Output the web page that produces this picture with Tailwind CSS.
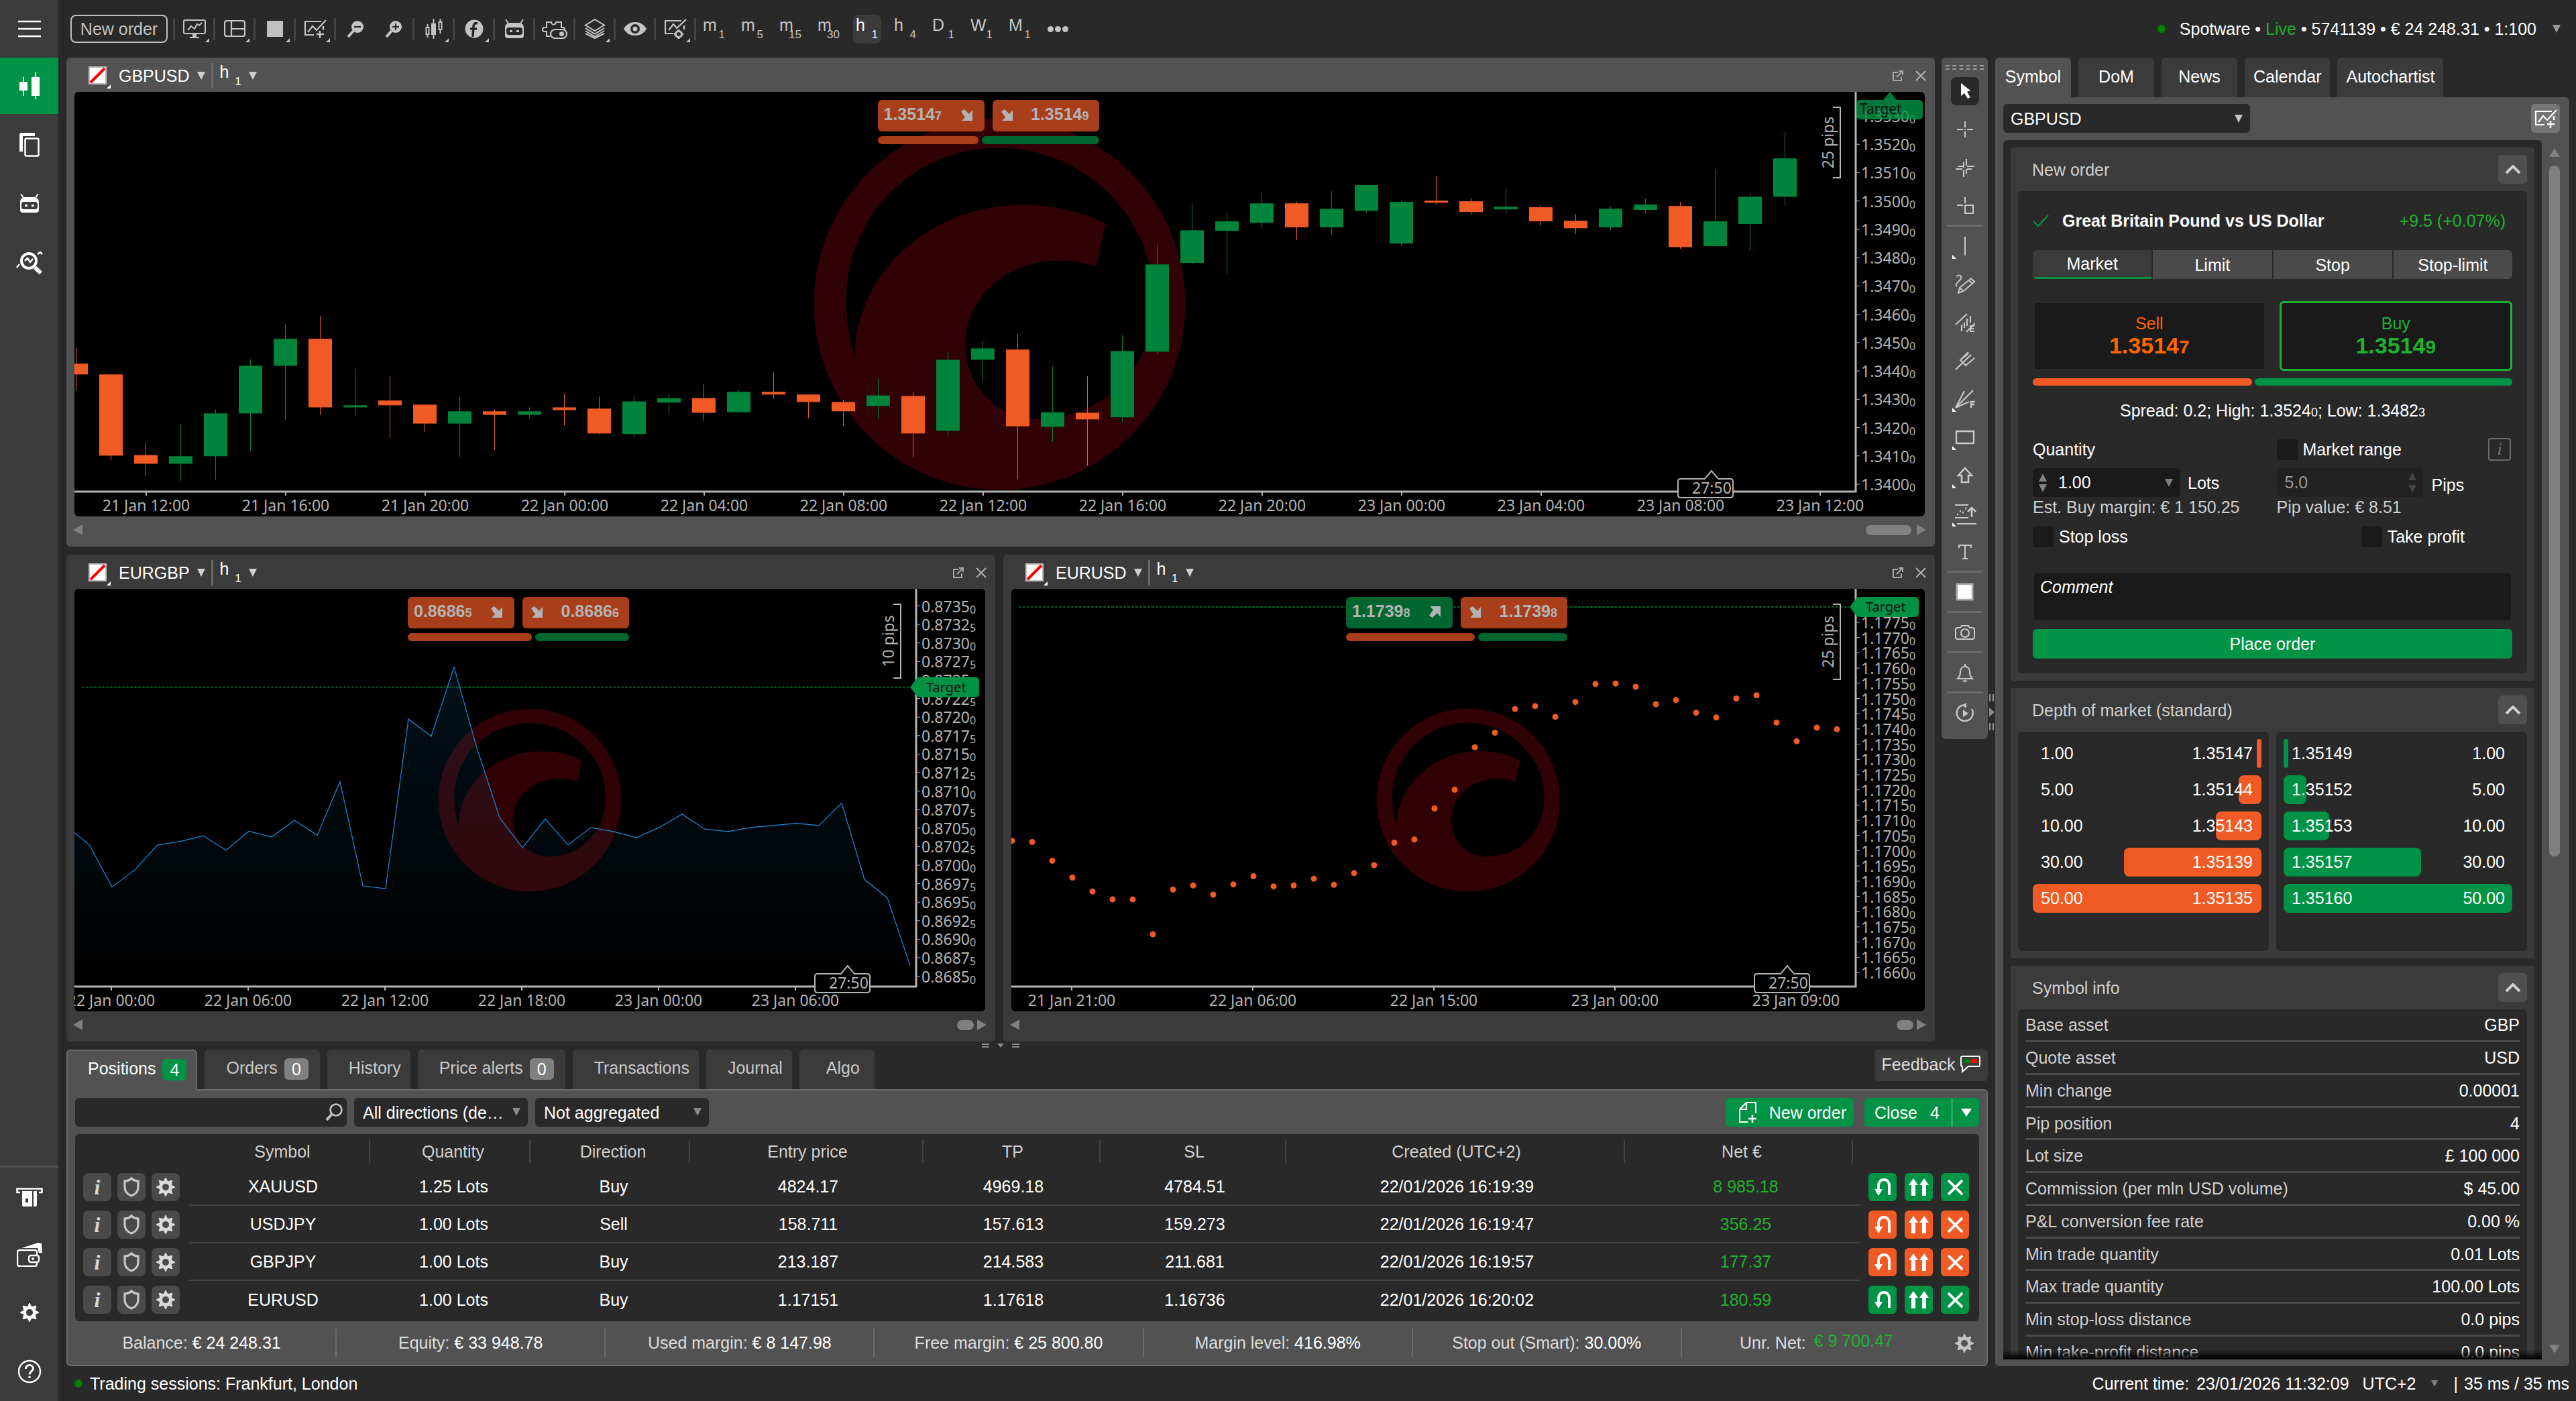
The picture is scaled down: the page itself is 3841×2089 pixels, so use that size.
<!DOCTYPE html>
<html lang="en">
<head>
  <meta charset="UTF-8">
  <title>Trading workspace</title>
  <script src="https://cdn.jsdelivr.net/npm/@tailwindcss/browser@4"></script>
</head>
<body class="bg-[#292929] font-['Liberation_Sans',Arial,sans-serif] text-[25px] leading-[30px] text-white">

  <!-- icons -->
  <svg class="hidden" xmlns="http://www.w3.org/2000/svg">
    <symbol id="i-menu" viewBox="0 0 34 26"><path d="M0 2h34M0 13h34M0 24h34" stroke="currentColor" stroke-width="2.4"/></symbol>
    <symbol id="i-bars" viewBox="0 0 30 40"><path d="M6 7v28M24 0v40" stroke="currentColor" stroke-width="2"/><path d="M0 14h12v13H0zM18 7h12v28H18z" fill="currentColor"/></symbol>
    <symbol id="i-copy" viewBox="0 0 30 36"><path d="M0 28V3a3 3 0 0 1 3-3h20v5H5v23z" fill="currentColor"/><rect x="8.500" y="8.500" width="20" height="26" rx="2" fill="none" stroke="currentColor" stroke-width="2.500"/></symbol>
    <symbol id="i-robot" viewBox="0 0 30 28"><path d="M2 0l4 6M28 0l-4 6" stroke="currentColor" stroke-width="2"/><path fill="currentColor" fill-rule="evenodd" d="M1 24V12C1 7 5 5 9 5h12c4 0 8 2 8 7v12a4 4 0 0 1-4 4H5a4 4 0 0 1-4-4zM7 12a4 4 0 0 0-4 4v3a4 4 0 0 0 4 4h16a4 4 0 0 0 4-4v-3a4 4 0 0 0-4-4zM8 16h4v3H8zM18 16h4v3h-4z"/></symbol>
    <symbol id="i-analyze" viewBox="0 0 40 34"><circle cx="19" cy="14" r="11" fill="none" stroke="currentColor" stroke-width="4"/><path d="M28 24l9 8" stroke="currentColor" stroke-width="6"/><path d="M13 14l4-4 4 6 4-5" fill="none" stroke="currentColor" stroke-width="2.500"/><path d="M1 24l4-5M32 4l4-3 3 3" fill="none" stroke="currentColor" stroke-width="2.500"/></symbol>
    <symbol id="i-atm" viewBox="0 0 40 28"><path d="M6 7H1.500V1.500h37V7H34" fill="none" stroke="currentColor" stroke-width="2.500"/><path fill="currentColor" fill-rule="evenodd" d="M9 5h22v21a2 2 0 0 1-2 2H11a2 2 0 0 1-2-2zM14 16v6h4v-6zM24 5v23h2V5z"/></symbol>
    <symbol id="i-wallet" viewBox="0 0 38 36"><path d="M7 8L32 0l5 1 1 14h-5l-2-7z" fill="currentColor"/><path d="M30 19v-5a3 3 0 0 0-3-3H4a3 3 0 0 0-3 3v18a3 3 0 0 0 3 3h23a3 3 0 0 0 3-3v-3" fill="none" stroke="currentColor" stroke-width="2.400"/><rect x="18" y="19" width="15" height="10" rx="3" fill="none" stroke="currentColor" stroke-width="2.400"/><circle cx="24" cy="24" r="2" fill="currentColor"/></symbol>
    <symbol id="i-gear" viewBox="0 0 30 30"><path fill="currentColor" stroke="currentColor" stroke-width="1" stroke-linejoin="round" fill-rule="evenodd" d="M15 1l3 5.900 6.900-1.800-1.800 6.900L29 15l-5.900 3 1.800 6.900-6.900-1.800L15 29l-3-5.900-6.900 1.800 1.800-6.900L1 15l5.900-3-1.800-6.900L12 6.900zM15 9.500a5.500 5.500 0 1 0 0 11 5.500 5.500 0 0 0 0-11z"/></symbol>
    <symbol id="i-help" viewBox="0 0 36 36"><circle cx="18" cy="18" r="16" fill="none" stroke="currentColor" stroke-width="2.400"/><path d="M12.500 14c0-3.500 2.400-5.500 5.500-5.500s5.500 2 5.500 5c0 4-5.500 4.500-5.500 9M18 25v3" fill="none" stroke="currentColor" stroke-width="3"/></symbol>
    <symbol id="i-monitor" viewBox="0 0 34 28"><rect x="1" y="1" width="32" height="20" rx="2" fill="none" stroke="currentColor" stroke-width="2"/><path d="M14 21h6v5h4v2H10v-2h4z" fill="currentColor"/><path d="M7 16l5-6 5 4 4-7 3 2 4-4" fill="none" stroke="currentColor" stroke-width="2"/></symbol>
    <symbol id="i-layout" viewBox="0 0 32 26"><rect x="1" y="1" width="30" height="23" rx="3" fill="none" stroke="currentColor" stroke-width="2.200"/><path d="M11 1v23M11 13h20" stroke="currentColor" stroke-width="2.200"/></symbol>
    <symbol id="i-chartplus" viewBox="0 0 34 28"><path d="M26 3H2v20h13" fill="none" stroke="currentColor" stroke-width="2.200"/><path d="M6 19l7-9 6 6L33 1" fill="none" stroke="currentColor" stroke-width="2.200"/><path d="M29 10v6M24 17v11M19 22h11" stroke="currentColor" stroke-width="2.400"/></symbol>
    <symbol id="i-chartgear" viewBox="0 0 34 30"><path d="M26 3H2v19h12" fill="none" stroke="currentColor" stroke-width="2.200"/><path d="M7 17l7-9 5 6L33 1M30 10v6" fill="none" stroke="currentColor" stroke-width="2.200"/><circle cx="22" cy="23" r="4.500" fill="none" stroke="currentColor" stroke-width="3"/><path d="M22 16v14M15 23h14" stroke="currentColor" stroke-width="3" stroke-dasharray="3 8"/></symbol>
    <symbol id="i-zoomout" viewBox="0 0 26 25"><circle cx="16" cy="9" r="9" fill="currentColor"/><path d="M10 15l-8 9" stroke="currentColor" stroke-width="4"/><path d="M11 9h10" stroke="#292929" stroke-width="2.200"/></symbol>
    <symbol id="i-zoomin" viewBox="0 0 26 25"><circle cx="16" cy="9" r="9" fill="currentColor"/><path d="M10 15l-8 9" stroke="currentColor" stroke-width="4"/><path d="M11 9h10M16 4v10" stroke="#292929" stroke-width="2.200"/></symbol>
    <symbol id="i-candles" viewBox="0 0 26 30"><path d="M3.500 8v5M3.500 23v5M12.500 0v30M22.500 0v5M22.500 16v6" stroke="currentColor" stroke-width="2"/><path d="M1.500 13h4v10h-4zM20.500 5h4v11h-4z" fill="none" stroke="currentColor" stroke-width="2"/><path d="M9 7h7v17H9z" fill="currentColor"/></symbol>
    <symbol id="i-func" viewBox="0 0 28 28"><circle cx="14" cy="14" r="13.500" fill="currentColor"/><path d="M19 6c-4-1.500-6 1-6 5l-1 15M8 14h10" fill="none" stroke="#292929" stroke-width="3.500"/></symbol>
    <symbol id="i-puzzle" viewBox="0 0 38 29"><path d="M13 25H7v-7H4a3 3 0 0 1 0-6h3V4h7a3.500 3.500 0 1 0 7 0h8v8h3a3 3 0 0 1 2 3" fill="none" stroke="currentColor" stroke-width="2"/><rect x="13" y="15" width="24" height="13" rx="6.500" fill="none" stroke="currentColor" stroke-width="2.200"/><circle cx="29.500" cy="21.500" r="3.500" fill="currentColor"/></symbol>
    <symbol id="i-layers" viewBox="0 0 32 30"><path d="M16 1l14 8.500L16 18 2 9.500zM2 14l14 8.500L30 14M2 18l14 8.500L30 18M2 22l14 7 14-7" fill="none" stroke="currentColor" stroke-width="2"/></symbol>
    <symbol id="i-eye" viewBox="0 0 34 20"><path fill="currentColor" fill-rule="evenodd" d="M0 10C4 3 10 0 17 0s13 3 17 10c-4 7-10 10-17 10S4 17 0 10zM17 3a7 7 0 1 0 0 14 7 7 0 0 0 0-14zM17 6.500a3.500 3.500 0 1 1 0 7 3.500 3.500 0 0 1 0-7z"/></symbol>
    <symbol id="i-down" viewBox="0 0 12 12"><path d="M0 0h12L6 12z" fill="currentColor"/></symbol>
    <symbol id="i-up" viewBox="0 0 12 12"><path d="M0 12h12L6 0z" fill="currentColor"/></symbol>
    <symbol id="i-left" viewBox="0 0 14 16"><path d="M14 0v16L0 8z" fill="currentColor"/></symbol>
    <symbol id="i-right" viewBox="0 0 14 16"><path d="M0 0v16L14 8z" fill="currentColor"/></symbol>
    <symbol id="i-corner" viewBox="0 0 6 6"><path d="M6 0v6H0z" fill="currentColor"/></symbol>
    <symbol id="i-popout" viewBox="0 0 16 16"><path d="M8 3H1v12h12V9M6 10l8-8M9 1h6v6" fill="none" stroke="currentColor" stroke-width="2"/></symbol>
    <symbol id="i-x" viewBox="0 0 16 16"><path d="M1 1l14 14M15 1L1 15" stroke="currentColor" stroke-width="2"/></symbol>
    <symbol id="i-se" viewBox="0 0 17 17"><path d="M17 1v16H1l5-5-6-9 5-3 7 7z" fill="currentColor"/></symbol>
    <symbol id="i-ne" viewBox="0 0 17 17"><path d="M17 16V0H1l5 5-6 9 5 3 7-7z" fill="currentColor"/></symbol>
    <symbol id="i-chevron" viewBox="0 0 24 14"><path d="M2 12L12 2l10 10" fill="none" stroke="currentColor" stroke-width="4"/></symbol>
    <symbol id="i-check" viewBox="0 0 24 18"><path d="M1 10l7 7L23 1" fill="none" stroke="currentColor" stroke-width="2.400"/></symbol>
    <symbol id="i-search" viewBox="0 0 26 26"><circle cx="16" cy="10" r="8.500" fill="none" stroke="currentColor" stroke-width="2.600"/><path d="M10 16l-8 9" stroke="currentColor" stroke-width="4"/></symbol>
    <symbol id="i-feedback" viewBox="0 0 30 26"><path d="M3 1h24a2 2 0 0 1 2 2v11a2 2 0 0 1-2 2H12l-9 8V16a2 2 0 0 1-2-2V3a2 2 0 0 1 2-2z" fill="none" stroke="#fff" stroke-width="2"/><path d="M5 5h9v6H5z" fill="#008000"/><path d="M16 5h9v6h-9z" fill="#f00"/></symbol>
    <symbol id="i-docplus" viewBox="0 0 26 31"><path d="M25 17V1H11L1 11v19h12M11 1v10H1" fill="none" stroke="currentColor" stroke-width="2.200"/><path d="M20 19v12M14 25h12" stroke="currentColor" stroke-width="2.600"/></symbol>
    <symbol id="i-shield" viewBox="0 0 26 30"><path d="M13 2c3 3 7 4 10 4v9c0 6-4 11-10 13C7 26 3 21 3 15V6c3 0 7-1 10-4z" fill="none" stroke="currentColor" stroke-width="3.200"/></symbol>
    <symbol id="i-reverse" viewBox="0 0 24 26"><path d="M6 17v-6c0-5 3-9 8-9s8 4 8 9v14" fill="none" stroke="currentColor" stroke-width="4"/><path d="M0 16h12L6 26z" fill="currentColor"/></symbol>
    <symbol id="i-double" viewBox="0 0 30 26"><path d="M0 10L7 0l7 10H10v16H4V10zM16 10L23 0l7 10h-4v16h-6V10z" fill="currentColor"/></symbol>
    <symbol id="i-close" viewBox="0 0 24 24"><path d="M1 1l22 22M23 1L1 23" stroke="currentColor" stroke-width="4"/></symbol>

    <!-- drawing tools -->
    <symbol id="t-cursor" viewBox="0 0 30 30"><path d="M9 3l14 11-5 2 5 8-4 2-5-8-5 4z" fill="#fff"/></symbol>
    <symbol id="t-cross" viewBox="0 0 30 30"><path d="M15 3v9M15 18v9M3 15h9M18 15h9M14 15h2" stroke="currentColor" stroke-width="2"/></symbol>
    <symbol id="t-cross2" viewBox="0 0 30 30"><path d="M13 7v8M17 2v10M13 18v11M17 17v7M1 17h10M5 13h7M18 17h7M18 13h11" stroke="currentColor" stroke-width="2"/></symbol>
    <symbol id="t-crossbox" viewBox="0 0 30 30"><path d="M15 2v9M3 14h9" stroke="currentColor" stroke-width="2"/><path d="M15 14h12v12H15z" fill="none" stroke="currentColor" stroke-width="2"/></symbol>
    <symbol id="t-line" viewBox="0 0 30 30"><path d="M15 1v28" stroke="currentColor" stroke-width="2"/></symbol>
    <symbol id="t-pencil" viewBox="0 0 30 30"><path d="M2 3c6-4 10 1 5 6s-7 6-4 9" fill="none" stroke="currentColor" stroke-width="2"/><path d="M5 28l2-8L24 6l5 5-16 14zM21 9l5 5M7 20l5 5" fill="none" stroke="currentColor" stroke-width="2"/></symbol>
    <symbol id="t-channel" viewBox="0 0 30 30"><path d="M1 18L18 2M17 29l13-13M10 18v10M14 15v8M18 9v11M23 5v10" stroke="currentColor" stroke-width="2.200"/><path d="M29 20h-6v8h6M23 24h5" fill="none" stroke="currentColor" stroke-width="2"/></symbol>
    <symbol id="t-fork" viewBox="0 0 30 30"><path d="M1 28L24 6M20 2L8 14l8 8L29 11M12 11L20 4" fill="none" stroke="currentColor" stroke-width="2.200"/></symbol>
    <symbol id="t-fan" viewBox="0 0 30 30"><path d="M1 28L14 3M1 28L27 2M1 28l20-9M1 28" stroke="currentColor" stroke-width="2.200"/><path d="M24 28v-9h6M24 23h5" fill="none" stroke="currentColor" stroke-width="2.400"/></symbol>
    <symbol id="t-rect" viewBox="0 0 30 30"><path d="M2 6h26v18H2z" fill="none" stroke="currentColor" stroke-width="2.400"/></symbol>
    <symbol id="t-arrow" viewBox="0 0 30 30"><path d="M15 4l10 11h-5v10H10V15H5z" fill="none" stroke="currentColor" stroke-width="2.600"/></symbol>
    <symbol id="t-pattern" viewBox="0 0 34 34"><path d="M2 4h20M2 23h20M5 32h29" stroke="currentColor" stroke-width="2.200"/><path d="M5 18h2M9 13h2M13 15h2M17 9h2" stroke="currentColor" stroke-width="2.600"/><path d="M27 22V10M21 14l6-6 6 6" fill="none" stroke="currentColor" stroke-width="2.600"/></symbol>
    <symbol id="t-text" viewBox="0 0 30 30"><path d="M6 9V5h18v4M15 5v20M11 25h8" fill="none" stroke="currentColor" stroke-width="2"/></symbol>
    <symbol id="t-fill" viewBox="0 0 30 30"><path d="M2 2h26v26H2z" fill="#fff" stroke="#aaa" stroke-width="3"/></symbol>
    <symbol id="t-camera" viewBox="0 0 30 30"><path d="M8 8l2-3h10l2 3h4a3 3 0 0 1 3 3v11a3 3 0 0 1-3 3H4a3 3 0 0 1-3-3V11a3 3 0 0 1 3-3z" fill="none" stroke="currentColor" stroke-width="2"/><circle cx="15" cy="16" r="6" fill="none" stroke="currentColor" stroke-width="2.200"/></symbol>
    <symbol id="t-bell" viewBox="0 0 30 30"><path d="M4 24c3-3 4-5 4-10s3-8 7-8 7 3 7 8 1 7 4 10zM15 2v4" fill="none" stroke="currentColor" stroke-width="2.200"/><path d="M12 27h6l-3 2z" fill="currentColor" stroke="currentColor"/></symbol>
    <symbol id="t-replay" viewBox="0 0 30 30"><path d="M13 3.200A12 12 0 1 0 25 9" fill="none" stroke="currentColor" stroke-width="2.400"/><path d="M17 0v8l-6-4z" fill="currentColor"/><path d="M12 10v11l8-5z" fill="currentColor"/></symbol>
    <pattern id="dots" width="4" height="4" patternUnits="userSpaceOnUse"><rect width="2" height="2" fill="#8a8a8a"/></pattern>
  </svg>

  <div class="flex h-screen overflow-hidden">

    <!-- sidebar -->
    <nav class="flex w-[87px] shrink-0 flex-col bg-[#3b3b3b]">
      <button aria-label="Menu" class="flex h-[86px] items-center justify-center"><svg class="h-[26px] w-[34px]"><use href="#i-menu"/></svg></button>
      <button aria-label="Trade" class="flex h-[84px] items-center justify-center bg-[#009345]"><svg class="h-[40px] w-[30px]"><use href="#i-bars"/></svg></button>
      <button aria-label="Copy" class="flex h-[92px] items-center justify-center"><svg class="h-[36px] w-[30px]"><use href="#i-copy"/></svg></button>
      <button aria-label="Algo" class="flex h-[82px] items-center justify-center"><svg class="h-[28px] w-[30px]"><use href="#i-robot"/></svg></button>
      <button aria-label="Analyze" class="flex h-[96px] items-center justify-center"><svg class="h-[34px] w-[40px]"><use href="#i-analyze"/></svg></button>
      <div class="mt-auto flex flex-col border-t-[3px] border-[#525252]">
        <button aria-label="Deposit" class="flex h-[88px] items-center justify-center"><svg class="h-[28px] w-[40px]"><use href="#i-atm"/></svg></button>
        <button aria-label="Wallet" class="flex h-[84px] items-center justify-center"><svg class="h-[36px] w-[38px]"><use href="#i-wallet"/></svg></button>
        <button aria-label="Settings" class="flex h-[88px] items-center justify-center"><svg class="h-[30px] w-[30px]"><use href="#i-gear"/></svg></button>
        <button aria-label="Help" class="flex h-[88px] items-center justify-center"><svg class="h-[36px] w-[36px]"><use href="#i-help"/></svg></button>
      </div>
    </nav>

    <div class="flex min-w-0 flex-1 flex-col">

      <!-- top toolbar -->
      <header class="flex h-[86px] shrink-0 items-center pr-[23px] pl-[18px] text-[#c4c4c4]">
        <button class="mr-[8px] h-[42px] w-[145px] rounded-[8px] border-2 border-[#c0c0c0]">New order</button>
        <div id="tools" class="flex"></div>
        <div id="frames" class="ml-[6px] flex gap-[15px]"></div>
        <button aria-label="More" class="ml-[20px] flex gap-[2px]">
          <i class="size-[9px] rounded-full bg-[#c4c4c4]"></i><i class="size-[9px] rounded-full bg-[#c4c4c4]"></i><i class="size-[9px] rounded-full bg-[#c4c4c4]"></i>
        </button>
        <button class="ml-auto flex items-center text-white">
          <i class="mr-[21px] size-[12px] rounded-full bg-[#008000]"></i>
          <span>Spotware • <span class="text-[#1db32f]">Live</span> • 5741139 • € 24 248.31 • 1:100</span>
          <svg class="ml-[24px] size-[12px] text-[#999]"><use href="#i-down"/></svg>
        </button>
      </header>

      <div class="flex min-h-0 flex-1 pr-[10px] pl-[12px]">

        <!-- charts and positions -->
        <main class="flex min-w-0 flex-1 flex-col">
          <div class="flex min-h-0 flex-1 gap-[10px]">
            <div class="flex min-w-0 flex-1 flex-col">
              <div id="charts" class="grid min-h-0 flex-1 grid-cols-[1385fr_1389fr] grid-rows-[729fr_726fr] gap-[12px]"></div>
              <div class="flex h-[12px] items-center justify-center gap-[12px] text-[#8a8a8a]">
                <i class="h-[6px] w-[11px] border-y-2 border-current"></i>
                <svg class="h-[6px] w-[10px]" viewBox="0 0 10 6"><path d="M0 0h10L5 6z" fill="currentColor"/></svg>
                <i class="h-[6px] w-[11px] border-y-2 border-current"></i>
              </div>
            </div>
            <div id="drawing" class="flex w-[69px] shrink-0 flex-col items-center self-start rounded-[6px] bg-[#525252] pb-[11px] text-[#c8c8c8]">
              <div class="flex h-[21px] w-[57px] flex-col justify-end gap-[3px] pb-[3px]">
                <i class="border-t-2 border-dashed border-[#999]"></i><i class="border-t-2 border-dashed border-[#999]"></i>
              </div>
            </div>
          </div>

          <!-- positions -->
          <section class="shrink-0">
            <div class="flex h-[59px] justify-between">
              <div id="tabs" class="flex gap-[11px]" role="tablist"></div>
              <button class="flex h-[47px] w-[169px] items-center justify-center gap-[8px] rounded-[6px] bg-[#3b3b3b] pb-[3px] text-[#dcdcdc]">Feedback <svg class="h-[26px] w-[30px]"><use href="#i-feedback"/></svg></button>
            </div>
            <div class="rounded-[6px] rounded-tl-none border-2 border-[#6b6b6b] bg-[#525252] px-[11px] pt-[11px]">
              <div class="mb-[11px] flex h-[43px] gap-[11px]">
                <label class="relative w-[405px]">
                  <input type="text" aria-label="Search" class="h-full w-full rounded-[6px] bg-[#292929] pr-12 pl-3 outline-none">
                  <svg class="absolute top-[8px] right-[6px] size-[26px] text-[#c4c4c4]"><use href="#i-search"/></svg>
                </label>
                <label class="relative w-[259px]">
                  <select aria-label="Direction" class="h-full w-full appearance-none rounded-[6px] bg-[#292929] pl-[13px]"><option>All directions (de…</option></select>
                  <svg class="pointer-events-none absolute top-[15px] right-[11px] size-[12px] text-[#8a8a8a]"><use href="#i-down"/></svg>
                </label>
                <label class="relative w-[259px]">
                  <select aria-label="Aggregation" class="h-full w-full appearance-none rounded-[6px] bg-[#292929] pl-[13px]"><option>Not aggregated</option></select>
                  <svg class="pointer-events-none absolute top-[15px] right-[11px] size-[12px] text-[#8a8a8a]"><use href="#i-down"/></svg>
                </label>
                <button class="ml-auto flex w-[191px] items-center justify-end gap-[19px] rounded-[6px] bg-[#009345] pr-[11px]"><svg class="h-[31px] w-[26px]"><use href="#i-docplus"/></svg>New order</button>
                <div class="ml-[5px] flex w-[171px] rounded-[6px] bg-[#009345]">
                  <button class="flex flex-1 items-center justify-between pr-[17px] pl-[15px]"><span>Close</span><span>4</span></button>
                  <button aria-label="Close options" class="flex w-[42px] items-center justify-center border-l-[3px] border-[#2ba562]"><svg class="h-[12px] w-[16px]" viewBox="0 0 16 12"><path d="M0 0h16L8 12z" fill="currentColor"/></svg></button>
                </div>
              </div>
              <div class="rounded-[6px] bg-[#292929] pb-[4px]">
                <table class="w-full table-fixed border-separate border-spacing-0 text-center">
                  <colgroup>
                    <col class="w-[170px]"><col class="w-[270px]"><col class="w-[239px]"><col class="w-[238px]"><col class="w-[348px]"><col class="w-[264px]"><col class="w-[277px]"><col class="w-[505px]"><col class="w-[350px]"><col class="w-[178px]">
                  </colgroup>
                  <thead class="text-[#cfcfcf]"><tr id="heads" class="h-[51px]"></tr></thead>
                  <tbody id="positions"></tbody>
                </table>
              </div>
              <div class="flex h-[65px] items-center">
                <div id="balance" class="-ml-[11px] grid flex-1 grid-cols-7 pr-[53px] text-center text-[#dcdcdc]"></div>
                <button aria-label="Panel settings" class="mr-[7px] -ml-[48px] text-[#c4c4c4]"><svg class="size-[30px]"><use href="#i-gear"/></svg></button>
              </div>
            </div>
          </section>
        </main>

        <div class="flex w-[11px] shrink-0 items-center justify-center text-[#8a8a8a]">
          <svg class="h-[54px] w-[8px]" viewBox="0 0 8 54"><path d="M1 0v11M6 0v11M1 43v11M6 43v11" stroke="currentColor" stroke-width="2.500"/><path d="M0 20v14l8-7z" fill="currentColor"/></svg>
        </div>

        <!-- symbol panel -->
        <aside class="flex w-[856px] shrink-0 flex-col">
          <div class="flex h-[59px] shrink-0 gap-[11px]" role="tablist">
            <button role="tab" class="min-w-[113px] rounded-t-[6px] bg-[#525252] px-[13px] pb-[4px]">Symbol</button>
            <button role="tab" class="min-w-[113px] rounded-t-[6px] bg-[#3b3b3b] px-[13px] pb-[4px]">DoM</button>
            <button role="tab" class="min-w-[113px] rounded-t-[6px] bg-[#3b3b3b] px-[13px] pb-[4px]">News</button>
            <button role="tab" class="min-w-[113px] rounded-t-[6px] bg-[#3b3b3b] px-[13px] pb-[4px]">Calendar</button>
            <button role="tab" class="min-w-[113px] rounded-t-[6px] bg-[#3b3b3b] px-[13px] pb-[4px]">Autochartist</button>
          </div>
          <div class="flex min-h-0 flex-1 flex-col rounded-[6px] rounded-tl-none bg-[#525252] pt-[10px] pr-[14px] pb-[10px] pl-[12px]">
            <div class="mb-[11px] flex h-[43px] shrink-0 justify-between">
              <label class="relative w-[368px]">
                <select aria-label="Symbol" class="h-full w-full appearance-none rounded-[6px] bg-[#292929] pl-[11px]"><option>GBPUSD</option></select>
                <svg class="pointer-events-none absolute top-[16px] right-[11px] size-[12px] text-[#c4c4c4]"><use href="#i-down"/></svg>
              </label>
              <button aria-label="Open chart" class="flex w-[43px] items-center justify-center rounded-[6px] bg-[#757575]"><svg class="h-[28px] w-[34px]"><use href="#i-chartplus"/></svg></button>
            </div>
            <div class="flex min-h-0 flex-1 gap-[11px]">
              <div class="relative min-w-0 flex-1 overflow-hidden rounded-t-[6px] bg-[#292929] p-[11px]">

                <!-- new order -->
                <section class="mb-[11px] rounded-[4px] bg-[#3b3b3b] px-[11px] pb-[11px]">
                  <div class="flex h-[65px] items-center">
                    <svg class="mr-[13px] h-[44px] w-[8px]"><rect width="8" height="44" fill="url(#dots)"/></svg>
                    <h2 class="text-[#cfcfcf]">New order</h2>
                    <button aria-label="Collapse" class="ml-auto flex size-[43px] items-center justify-center rounded-[6px] bg-[#4f4f4f] text-[#d0d0d0]"><svg class="h-[14px] w-[24px]"><use href="#i-chevron"/></svg></button>
                  </div>
                  <form class="rounded-[6px] bg-[#292929] px-[22px] pt-[22px] pb-[22px]">
                    <div class="flex h-[44px] items-center">
                      <svg class="mr-[20px] h-[18px] w-[24px] text-[#009345]"><use href="#i-check"/></svg>
                      <b>Great Britain Pound vs US Dollar</b>
                      <span class="mr-[10px] ml-auto text-[#1db32f]">+9.5 (+0.07%)</span>
                    </div>
                    <div class="mt-[22px] grid h-[43px] grid-cols-4 gap-[2px] overflow-hidden rounded-[6px]">
                      <button type="button" class="border-b-[3px] border-[#009345] bg-[#3b3b3b]">Market</button>
                      <button type="button" class="bg-[#4a4a4a]">Limit</button>
                      <button type="button" class="bg-[#4a4a4a]">Stop</button>
                      <button type="button" class="bg-[#4a4a4a]">Stop-limit</button>
                    </div>
                    <div class="mt-[33px] grid h-[104px] grid-cols-2 gap-[20px]">
                      <button type="button" class="rounded-[6px] border-[3px] border-transparent bg-[#1a1a1a] bg-clip-padding text-[#ff6600]">
                        <span class="block">Sell</span><b class="block text-[34px] leading-[36px]">1.3514<span class="text-[28px]">7</span></b>
                      </button>
                      <button type="button" class="rounded-[6px] border-[3px] border-[#1db32f] bg-[#1a1a1a] text-[#1db32f]">
                        <span class="block">Buy</span><b class="block text-[34px] leading-[36px]">1.3514<span class="text-[28px]">9</span></b>
                      </button>
                    </div>
                    <div class="mt-[11px] grid h-[11px] grid-cols-[327fr_383fr] gap-[4px]"><i class="rounded-full bg-[#f05a25]"></i><i class="rounded-full bg-[#009345]"></i></div>
                    <p class="mt-[22px] text-center">Spread: 0.2; High: 1.3524<span class="text-[18px]">0</span>; Low: 1.3482<span class="text-[18px]">3</span></p>
                    <div class="mt-[23px] grid h-[34px] grid-cols-[363fr_351fr] items-center">
                      <label for="qty">Quantity</label>
                      <div class="flex items-center">
                        <label class="flex items-center gap-[8px]"><input type="checkbox" class="size-[31px] appearance-none rounded-[4px] bg-[#1a1a1a]">Market range</label>
                        <button type="button" aria-label="Info" class="mr-[2px] ml-auto size-[34px] rounded-[4px] border-2 border-[#6b6b6b] font-['Liberation_Serif',serif] text-[26px] leading-[26px] text-[#777] italic">i</button>
                      </div>
                    </div>
                    <div class="mt-[11px] grid h-[43px] grid-cols-[363fr_351fr]">
                      <div class="flex items-center">
                        <div class="relative mr-[11px] h-full w-[220px]">
                          <input id="qty" type="text" value="1.00" class="h-full w-full rounded-[6px] bg-[#1a1a1a] pl-[38px]">
                          <div class="absolute top-[8px] left-[9px] flex flex-col gap-[4px] text-[#808080]"><svg class="size-[12px]"><use href="#i-up"/></svg><svg class="size-[12px]"><use href="#i-down"/></svg></div>
                          <svg class="absolute top-[16px] right-[11px] size-[12px] text-[#808080]"><use href="#i-down"/></svg>
                        </div>
                        Lots
                      </div>
                      <div class="flex items-center">
                        <div class="relative mr-[13px] h-full w-[218px]">
                          <input type="text" aria-label="Market range, pips" value="5.0" disabled class="h-full w-full rounded-[6px] bg-[#212121] pl-[12px] text-[#999]">
                          <div class="absolute top-[6px] right-[10px] flex flex-col gap-[7px] text-[#444]"><svg class="size-[12px]"><use href="#i-up"/></svg><svg class="size-[12px]"><use href="#i-down"/></svg></div>
                        </div>
                        <span class="pt-[6px]">Pips</span>
                      </div>
                    </div>
                    <div class="grid grid-cols-[363fr_351fr] text-[#cfcfcf]"><span>Est. Buy margin: € 1 150.25</span><span>Pip value: € 8.51</span></div>
                    <div class="mt-[13px] flex h-[32px] items-center justify-between pr-[71px]">
                      <label class="flex items-center gap-[8px]"><input type="checkbox" class="size-[31px] appearance-none rounded-[4px] bg-[#1a1a1a]">Stop loss</label>
                      <label class="flex items-center gap-[8px]"><input type="checkbox" class="size-[31px] appearance-none rounded-[4px] bg-[#1a1a1a]">Take profit</label>
                    </div>
                    <div class="mt-[39px] px-[2px]">
                      <textarea aria-label="Comment" placeholder="Comment" class="block h-[70px] w-full resize-none rounded-[4px] bg-[#1a1a1a] px-[9px] pt-[5px] italic placeholder:text-white"></textarea>
                    </div>
                    <button type="button" class="mt-[13px] h-[44px] w-full rounded-[6px] bg-[#009345]">Place order</button>
                  </form>
                </section>

                <!-- depth of market -->
                <section class="mb-[11px] rounded-[4px] bg-[#3b3b3b] px-[11px] pb-[11px]">
                  <div class="flex h-[65px] items-center">
                    <svg class="mr-[13px] h-[44px] w-[8px]"><rect width="8" height="44" fill="url(#dots)"/></svg>
                    <h2 class="text-[#cfcfcf]">Depth of market (standard)</h2>
                    <button aria-label="Collapse" class="ml-auto flex size-[43px] items-center justify-center rounded-[6px] bg-[#4f4f4f] text-[#d0d0d0]"><svg class="h-[14px] w-[24px]"><use href="#i-chevron"/></svg></button>
                  </div>
                  <div class="grid h-[327px] grid-cols-2 gap-[11px]">
                    <div id="bids" class="flex flex-col gap-[11px] rounded-[6px] bg-[#292929] pt-[11px] pr-[11px] pl-[22px]"></div>
                    <div id="asks" class="flex flex-col gap-[11px] rounded-[6px] bg-[#292929] pt-[11px] pr-[22px] pl-[11px]"></div>
                  </div>
                </section>

                <!-- symbol info -->
                <section class="rounded-[4px] bg-[#3b3b3b] px-[11px] pb-[11px]">
                  <div class="flex h-[65px] items-center">
                    <svg class="mr-[13px] h-[44px] w-[8px]"><rect width="8" height="44" fill="url(#dots)"/></svg>
                    <h2 class="text-[#cfcfcf]">Symbol info</h2>
                    <button aria-label="Collapse" class="ml-auto flex size-[43px] items-center justify-center rounded-[6px] bg-[#4f4f4f] text-[#d0d0d0]"><svg class="h-[14px] w-[24px]"><use href="#i-chevron"/></svg></button>
                  </div>
                  <dl id="info" class="rounded-[6px] bg-[#292929] px-[11px]"></dl>
                </section>
                <div class="absolute inset-x-0 bottom-0 h-[14px] bg-linear-to-b from-transparent to-black"></div>
              </div>

              <!-- scrollbar -->
              <div class="flex w-[16px] shrink-0 flex-col items-center justify-between pt-[12px] pb-[9px] text-[#808080]">
                <svg class="h-[13px] w-[16px]" viewBox="0 0 16 13"><path d="M0 13h16L8 0z" fill="currentColor"/></svg>
                <div class="flex w-full flex-1 flex-col py-[13px]"><i class="h-[59%] rounded-full bg-[#808080]"></i></div>
                <svg class="h-[13px] w-[16px]" viewBox="0 0 16 13"><path d="M0 0h16L8 13z" fill="currentColor"/></svg>
              </div>
            </div>
          </div>
        </aside>
      </div>

      <!-- status bar -->
      <footer class="flex h-[52px] shrink-0 items-center pr-[10px] pl-[24px]">
        <i class="mr-[11px] size-[12px] rounded-full bg-[#008000]"></i>Trading sessions: Frankfurt, London
        <span class="ml-auto">Current time:</span>
        <span class="ml-[11px]">23/01/2026 11:32:09</span>
        <span class="ml-[20px]">UTC+2</span>
        <svg class="mr-[24px] ml-[22px] size-[10px] text-[#808080]"><use href="#i-down"/></svg>
        <span>|</span><span class="ml-[9px]">35 ms / 35 ms</span>
      </footer>
    </div>
  </div>

  <script>
    const $ = id => document.getElementById(id);
    const icon = (name, cls) => `<svg class="${cls}"><use href="#${name}"/></svg>`;

    // toolbar: icon, size classes, has menu corner, has separator
    const tools = [
      ['i-monitor', 'h-[28px] w-[34px]', 1, 1], ['i-layout', 'h-[26px] w-[32px]', 1, 1], ['', '', 1, 1],
      ['i-chartplus', 'h-[28px] w-[34px]', 1, 1], ['i-zoomout', 'h-[25px] w-[26px]', 0, 1], ['i-zoomin', 'h-[25px] w-[26px]', 0, 0],
      ['i-candles', 'h-[30px] w-[26px]', 1, 1], ['i-func', 'size-[28px]', 1, 1], ['i-robot', 'h-[28px] w-[30px]', 0, 1],
      ['i-puzzle', 'h-[29px] w-[38px]', 0, 1], ['i-layers', 'h-[30px] w-[32px]', 1, 1], ['i-eye', 'h-[20px] w-[34px]', 0, 1],
      ['i-chartgear', 'h-[30px] w-[34px]', 1, 1]
    ];
    $('tools').innerHTML = tools.map(([name, size, corner, sep]) => `
      <button aria-label="${name.slice(2) || 'color'}" class="relative flex h-[33px] items-center justify-center ${sep ? 'w-[60px] border-l-[3px] border-[#434343]' : 'w-[57px]'}">
        ${name ? icon(name, size) : '<i class="size-[24px] bg-[#c0c0c0]"></i>'}
        ${corner ? icon('i-corner', 'absolute -bottom-[3px] right-[6px] size-[6px]') : ''}
      </button>`).join('') + '<i class="h-[33px] w-[3px] bg-[#434343]"></i>';

    const frames = [['m', 1], ['m', 5], ['m', 15], ['m', 30], ['h', 1], ['h', 4], ['D', 1], ['W', 1], ['M', 1]];
    $('frames').innerHTML = frames.map(([unit, n]) => `
      <button class="flex h-[43px] w-[42px] flex-col rounded-[8px] pt-[6px] pr-[5px] pl-[4px] ${unit + n === 'h1' ? 'bg-[#3b3b3b] text-white' : ''}">
        <span class="text-left leading-[18px]">${unit}</span><span class="text-right text-[17px] leading-[12px]">${n}</span>
      </button>`).join('');

    // drawing tools, '-' is a separator, '+' marks a submenu
    const drawing = 't-cursor t-cross t-cross2 t-crossbox - t-line+ t-pencil t-channel t-fork t-fan+ t-rect+ t-arrow+ t-pattern+ t-text - t-fill - t-camera - t-bell - t-replay'.split(' ');
    $('drawing').innerHTML += drawing.map(t => {
      if (t === '-') return '<i class="h-[3px] w-[53px] bg-[#6b6b6b]"></i>';
      const name = t.replace('+', '');
      return `<button aria-label="${name.slice(2)}" class="relative flex h-[57px] w-[57px] items-center justify-center">
        <span class="flex size-[42px] items-center justify-center rounded-[8px] ${name === 't-cursor' ? 'bg-[#292929]' : ''}">${icon(name, name === 't-pattern' ? 'size-[34px]' : name === 't-fill' ? 'size-[27px]' : 'size-[30px]')}</span>
        ${t.endsWith('+') ? '<svg class="absolute bottom-[9px] left-[10px] size-[6px] text-white" viewBox="0 0 6 6"><path d="M0 0v6h6z" fill="currentColor"/></svg>' : ''}
      </button>`;
    }).join('');

    // lower tabs
    const tabs = [['Positions', 4], ['Orders', 0], ['History'], ['Price alerts', 0], ['Transactions'], ['Journal'], ['Algo']];
    $('tabs').innerHTML = tabs.map(([name, n], i) => `
      <button role="tab" class="flex min-w-[112px] items-center justify-center rounded-t-[6px] ${n === 0 ? 'pr-[17px]' : 'pr-[14px]'} ${i ? 'bg-[#3b3b3b] pb-[5px] pl-[13px] text-[#c8c8c8]' : 'relative -mb-[2px] h-[61px] border-2 border-b-0 border-[#6b6b6b] bg-[#525252] pb-[7px] pl-[11px]'}">
        <svg class="mr-[11px] h-[26px] w-[8px]"><rect width="8" height="26" fill="url(#dots)"/></svg>${name}
        ${n === undefined ? '' : `<span class="ml-[10px] mt-[3px] w-[36px] rounded-[6px] leading-[32px] text-white ${n ? 'bg-[#009345]' : 'bg-[#808080]'}">${n}</span>`}
      </button>`).join('');

    // positions table
    const shift = i => [1, 2, 3, 8].includes(i) ? 'pl-[10px]' : 'pl-[4px]';
    const heads = ['', 'Symbol', 'Quantity', 'Direction', 'Entry price', 'TP', 'SL', 'Created (UTC+2)', 'Net €', ''];
    $('heads').innerHTML = heads.map((h, i) => `
      <th class="p-0 font-normal ${i === 8 ? 'pr-[10px]' : ''}"><div class="h-[34px] leading-[34px] ${h ? 'border-r-2 border-[#434343]' : ''} ${shift(i)}">${h}</div></th>`).join('');
    const positions = [
      ['XAUUSD', '1.25 Lots', 'Buy', '4824.17', '4969.18', '4784.51', '22/01/2026 16:19:39', '8 985.18'],
      ['USDJPY', '1.00 Lots', 'Sell', '158.711', '157.613', '159.273', '22/01/2026 16:19:47', '356.25', 'bg-[#f05a25]'],
      ['GBPJPY', '1.00 Lots', 'Buy', '213.187', '214.583', '211.681', '22/01/2026 16:19:57', '177.37', 'bg-[#f05a25]'],
      ['EURUSD', '1.00 Lots', 'Buy', '1.17151', '1.17618', '1.16736', '22/01/2026 16:20:02', '180.59']
    ];
    $('positions').innerHTML = positions.map((p, r) => `
      <tr class="h-[56px]">
        <td class="p-0"><div class="flex gap-[9px] pl-[12px]">
          <button aria-label="Details" class="size-[42px] rounded-[8px] bg-[#4a4a4a] font-['Liberation_Serif',serif] text-[32px] leading-[38px] font-bold text-[#d6d6d6] italic">i</button>
          <button aria-label="Protection" class="flex size-[42px] items-center justify-center rounded-[8px] bg-[#4a4a4a] text-[#c8c8c8]">${icon('i-shield', 'h-[30px] w-[26px]')}</button>
          <button aria-label="Modify" class="flex size-[42px] items-center justify-center rounded-[8px] bg-[#4a4a4a] text-[#dcdcdc]">${icon('i-gear', 'size-[30px]')}</button>
        </div></td>
        ${p.slice(0, 8).map((v, i) => `<td class="py-0 pr-0 ${shift(i + 1)} ${i === 7 ? 'text-[#1db32f]' : ''} ${r < 3 ? 'border-b-2 border-[#434343]' : ''}">${v}</td>`).join('')}
        <td class="p-0"><div class="flex gap-[12px] pl-[13px]">
          ${[['i-reverse', 'h-[26px] w-[24px]'], ['i-double', 'h-[26px] w-[30px]'], ['i-close', 'size-[23px]']].map(([n, s]) => `
            <button aria-label="${n.slice(2)}" class="flex size-[42px] items-center justify-center rounded-[6px] ${p[8] || 'bg-[#009345]'}">${icon(n, s)}</button>`).join('')}
        </div></td>
      </tr>`).join('');

    const balance = [['Balance:', '€ 24 248.31'], ['Equity:', '€ 33 948.78'], ['Used margin:', '€ 8 147.98'], ['Free margin:', '€ 25 800.80'], ['Margin level:', '416.98%'], ['Stop out (Smart):', '30.00%']];
    $('balance').innerHTML = balance.map(([k, v]) => `
      <div class="h-[43px] border-r-2 border-[#6b6b6b] leading-[43px]">${k} <span class="text-white">${v}</span></div>`).join('') +
      '<div class="h-[43px] leading-[43px]">Unr. Net: <span class="relative -top-[3px] ml-[5px] text-[#1db32f]">€ 9 700.47</span></div>';

    // depth of market
    const depth = [['1.00', '1.35147', '1.35149', 2], ['5.00', '1.35144', '1.35152', 10], ['10.00', '1.35143', '1.35153', 20], ['30.00', '1.35139', '1.35157', 60], ['50.00', '1.35135', '1.35160', 100]];
    $('bids').innerHTML = depth.map(([q, bid, ask, w]) => `
      <div class="relative h-[43px]"><i class="absolute inset-y-0 right-0 rounded-[8px] bg-[#f05a25]" style="width:${w}%"></i>
        <div class="relative flex justify-between pr-[13px] pl-[12px] leading-[43px]"><span>${q}</span><span>${bid}</span></div></div>`).join('');
    $('asks').innerHTML = depth.map(([q, bid, ask, w]) => `
      <div class="relative h-[43px]"><i class="absolute inset-y-0 left-0 rounded-[8px] bg-[#009345]" style="width:${w}%"></i>
        <div class="relative flex justify-between pr-[11px] pl-[12px] leading-[43px]"><span>${ask}</span><span>${q}</span></div></div>`).join('');

    const info = [['Base asset', 'GBP'], ['Quote asset', 'USD'], ['Min change', '0.00001'], ['Pip position', '4'], ['Lot size', '£ 100 000'], ['Commission (per mln USD volume)', '$ 45.00'], ['P&amp;L conversion fee rate', '0.00 %'], ['Min trade quantity', '0.01 Lots'], ['Max trade quantity', '100.00 Lots'], ['Min stop-loss distance', '0.0 pips'], ['Min take-profit distance', '0.0 pips']];
    $('info').innerHTML = info.map(([k, v]) => `
      <div class="flex h-[49px] items-center justify-between border-b-[3px] border-[#4a4a4a] nth-[4n]:h-[48px]"><dt class="text-[#cfcfcf]">${k}</dt><dd>${v}</dd></div>`).join('');

    // charts. levels are measured downwards, domain = [top, time axis]
    const charts = [
      { symbol: 'GBPUSD', active: true, sell: ['1.3514', 7, 'i-se'], buy: ['1.3514', 9], bars: 'grid-cols-[150fr_175fr]',
        domain: [38, 1372], prices: { first: 1.353, step: 0.001, at: 36, gap: 42.23, n: 14 }, times: { last: 53, gap: 208, list: ['23 Jan 12:00', '23 Jan 08:00', '23 Jan 04:00', '23 Jan 00:00', '22 Jan 20:00', '22 Jan 16:00', '22 Jan 12:00', '22 Jan 08:00', '22 Jan 04:00', '22 Jan 00:00', '21 Jan 20:00', '21 Jan 16:00', '21 Jan 12:00'] },
        pips: ['25 pips', 105], timer: [265, 215], target: 'up' },
      { symbol: 'EURGBP', sell: ['0.8686', 5, 'i-se'], buy: ['0.8686', 6], bars: 'grid-cols-[186fr_140fr]',
        domain: [123, 1378], prices: { first: 0.8735, step: 0.00025, at: 25.5, gap: 27.61, n: 21 }, times: { last: 180, gap: 204, list: ['23 Jan 06:00', '23 Jan 00:00', '22 Jan 18:00', '22 Jan 12:00', '22 Jan 06:00', '22 Jan 00:00'] },
        pips: ['10 pips', 110], timer: [151, 102], target: 146.5 },
      { symbol: 'EURUSD', sell: ['1.1739', 8, 'i-ne'], buy: ['1.1739', 8], bars: 'grid-cols-[192fr_133fr]',
        domain: [123, 1378], prices: { first: 1.1775, step: 0.0005, at: 50, gap: 22.7, n: 24 }, times: { last: 89, gap: 270, list: ['23 Jan 09:00', '23 Jan 00:00', '22 Jan 15:00', '22 Jan 06:00', '21 Jan 21:00'] },
        pips: ['25 pips', 112], timer: [151, 102], target: 27 }
    ];

    // [up, body top, body bottom, high, low]
    const candles = [
      [0,945,981,894,1034],[0,981,1252,981,1268],[0,1250,1279,1207,1319],[1,1254,1279,1145,1337],[1,1111,1254,1098,1333],[1,952,1111,930,1236],[1,862,952,813,1133],[0,862,1091,786,1116],
      [1,1084,1091,961,1120],[0,1068,1084,986,1192],[0,1082,1145,1082,1174],[1,1104,1145,1057,1257],[0,1104,1116,1098,1234],[1,1104,1116,1091,1127],[0,1091,1100,1046,1151],[0,1095,1178,1055,1180],
      [1,1071,1180,1051,1189],[1,1060,1075,1046,1116],[0,1060,1109,1012,1136],[1,1039,1107,1033,1107],[0,1039,1048,974,1062],[0,1048,1073,1048,1127],[0,1073,1104,1066,1154],[1,1051,1086,995,1129],
      [0,1053,1178,1039,1257],[1,932,1169,907,1185],[1,894,932,869,1004],[0,898,1154,847,1331],[1,1107,1156,954,1205],[0,1109,1131,986,1286],[1,903,1124,849,1138],[1,614,905,547,914],
      [1,500,609,410,614],[1,470,502,441,645],[1,410,475,376,490],[0,410,490,405,533],[1,428,490,370,513],[1,349,435,349,441],[1,405,544,399,553],[0,401,408,318,412],
      [0,403,439,392,448],[1,421,430,358,444],[0,423,470,417,484],[0,468,493,446,513],[1,428,490,421,500],[1,414,432,394,441],[0,419,556,405,562],[1,470,553,296,553],[1,388,479,376,569],[1,260,388,172,417]
    ];
    const area = [872,930,1064,1010,931,920,902,948,888,906,853,901,731,1060,1069,534,588,370,625,845,940,849,931,876,889,908,876,834,881,889,876,870,863,870,799,1040,1098,1311];
    const dots = [918,922,981,1034,1078,1103,1103,1213,1072,1059,1088,1056,1030,1062,1059,1038,1057,1020,995,924,914,816,757,623,577,502,493,527,480,423,422,432,487,474,514,529,469,459,545,604,561,566];

    $('charts').innerHTML = charts.map((c, i) => `
      <section class="flex min-h-0 min-w-0 flex-col rounded-[6px] pr-[15px] pl-[12px] ${c.active ? 'col-span-2 bg-[#525252]' : 'bg-[#3b3b3b]'}">
        <div class="flex h-[51px] shrink-0 items-center pt-[2px]">
          <svg class="mr-[13px] h-[28px] w-[8px]"><rect width="8" height="28" fill="url(#dots)"/></svg>
          <button aria-label="Color" class="relative mr-[18px]">
            <svg class="size-[27px]" viewBox="0 0 27 27"><path d="M1 1h25v25H1z" fill="#fff" stroke="#c0c0c0" stroke-width="2"/><path d="M3 24L24 3" stroke="#f00" stroke-width="4"/></svg>
            ${icon('i-corner', 'absolute -right-[6px] -bottom-[6px] size-[6px]')}
          </button>
          <button class="flex items-center gap-[11px]">${c.symbol}${icon('i-down', 'size-[12px] text-[#d0d0d0]')}</button>
          <i class="mr-[10px] ml-[9px] h-[38px] w-[3px] bg-[#6b6b6b]"></i>
          <button class="flex items-center">
            <span class="flex w-[32px] flex-col"><span class="text-left leading-[18px]">h</span><span class="text-right text-[17px] leading-[12px]">1</span></span>
            ${icon('i-down', 'ml-[11px] size-[12px] text-[#d0d0d0]')}
          </button>
          <button aria-label="Detach" class="ml-auto text-[#a8a8a8]">${icon('i-popout', 'size-[16px]')}</button>
          <button aria-label="Close chart" class="-mr-[2px] ml-[18px] text-[#b0b0b0]">${icon('i-x', 'size-[16px]')}</button>
        </div>
        <div class="relative min-h-0 flex-1 overflow-hidden rounded-[6px] bg-black">
          <svg id="chart${i}" class="absolute inset-0 size-full"></svg>
          <div class="absolute inset-x-0 top-[12px] flex justify-center pr-[34px]">
            <div class="w-[330px] font-bold text-[#b3b3b3]">
              <div class="grid h-[42px] grid-cols-2 gap-[12px] leading-[42px]">
                <button class="flex items-center justify-between rounded-[6px] pr-[18px] pb-[2px] pl-[9px] ${c.sell[2] === 'i-ne' ? 'bg-[#006630]' : 'bg-[#a83e1a]'}"><span>${c.sell[0]}<span class="text-[18px]">${c.sell[1]}</span></span>${icon(c.sell[2], 'size-[17px]')}</button>
                <button class="flex items-center justify-between rounded-[6px] bg-[#a83e1a] pr-[15px] pb-[2px] pl-[13px]">${icon('i-se', 'size-[17px]')}<span>${c.buy[0]}<span class="text-[18px]">${c.buy[1]}</span></span></button>
              </div>
              <div class="mt-[12px] grid h-[12px] gap-[5px] ${c.bars}"><i class="rounded-full bg-[#a83e1a]"></i><i class="rounded-full bg-[#006630]"></i></div>
            </div>
          </div>
        </div>
        <div class="-mx-[2px] flex h-[45px] shrink-0 items-center pb-[5px] text-[#808080]">
          ${icon('i-left', 'h-[16px] w-[14px]')}
          <i class="ml-auto h-[15px] rounded-full bg-[#808080] ${c.active ? 'mr-[8px] w-[68px]' : 'mr-[5px] w-[25px]'}"></i>
          ${icon('i-right', 'h-[16px] w-[14px]')}
        </div>
      </section>`).join('');

    function add(parent, tag, attrs, text) {
      const node = document.createElementNS('http://www.w3.org/2000/svg', tag);
      for (const k in attrs) node.setAttribute(k, attrs[k]);
      if (text !== undefined) node.textContent = text;
      parent.appendChild(node);
      return node;
    }

    function draw(c, index) {
      const svg = $('chart' + index);
      svg.innerHTML = '';
      const { width: W, height: H } = svg.parentElement.getBoundingClientRect();
      const ax = W - 103, ay = H - 37;
      const grey = '#b4b4b4', up = '#00833b', down = '#f05a25';
      const font = { 'font-family': "'Noto Sans', 'Open Sans', sans-serif", 'font-size': 23, fill: grey };
      const y = v => (v - c.domain[0]) / (c.domain[1] - c.domain[0]) * ay;

      // broker watermark
      add(svg, 'path', {
        transform: `translate(${W / 2} ${H / 2}) scale(${W / 2759})`, fill: '#300205', 'fill-rule': 'evenodd',
        d: 'M0 -277A277 277 0 1 1 0 277A277 277 0 1 1 0 -277ZM-216 80C-225 45 -229 20 -229 -5C-229 -135 -126 -233 0 -233C126 -233 230 -130 230 -5C230 90 160 171 55 171C-5 171 -51 120 -51 60C-51 -10 10 -65 88 -65C108 -65 127 -62 144 -56L158 -120C122 -138 80 -148 35 -148C-105 -148 -216 -45 -216 80Z'
      });

      if (typeof c.target === 'number') {
        add(svg, 'path', { d: `M11 ${c.target}H${ax - 10}`, stroke: up, 'stroke-width': 1.5, 'stroke-dasharray': '4 2' });
      }

      if (index === 0) {
        candles.forEach(([isUp, top, bottom, high, low], i) => {
          const x = ax - 106 - 52 * (candles.length - 1 - i);
          const fill = isUp ? up : down;
          add(svg, 'rect', { x: x, y: y(high), width: 1, height: y(low) - y(high), fill });
          add(svg, 'rect', { x: x - 17, y: y(top), width: 35, height: Math.max(2, y(bottom) - y(top)), fill });
        });
      } else if (index === 1) {
        const pts = area.map((v, i) => `${ax - 9 - 34 * (area.length - 1 - i)},${y(v)}`);
        const grad = add(add(svg, 'defs', {}), 'linearGradient', { id: 'fade', x1: 0, y1: 0, x2: 0, y2: 1 });
        add(grad, 'stop', { offset: 0, 'stop-color': '#1496e6', 'stop-opacity': .11 });
        add(grad, 'stop', { offset: 1, 'stop-color': '#1496e6', 'stop-opacity': 0 });
        add(svg, 'polygon', { points: `${pts.join(' ')} ${ax - 9},${ay} -20,${ay}`, fill: 'url(#fade)' });
        add(svg, 'polyline', { points: pts.join(' '), fill: 'none', stroke: '#1a8cdc', 'stroke-width': 1.2 });
      } else {
        dots.forEach((v, i) => add(svg, 'circle', { cx: ax - 28 - 30 * (dots.length - 1 - i), cy: y(v), r: 4.5, fill: down }));
      }

      // axes
      add(svg, 'path', { d: `M0 ${ay}H${ax}V0`, fill: 'none', stroke: grey, 'stroke-width': 3 });
      for (let i = 0; i < c.prices.n; i++) {
        const py = c.prices.at + c.prices.gap * i;
        const s = (c.prices.first - c.prices.step * i).toFixed(5);
        add(svg, 'path', { d: `M${ax} ${py}h6`, stroke: grey });
        const t = add(svg, 'text', { ...font, x: ax + 8, y: py + 9 }, s.slice(0, 6));
        add(t, 'tspan', { dy: 2, 'font-size': 16 }, s.slice(6));
      }
      c.times.list.forEach((label, i) => {
        const x = ax - c.times.last - c.times.gap * i;
        add(svg, 'path', { d: `M${x} ${ay}v6`, stroke: grey, 'stroke-width': 2 });
        add(svg, 'text', { ...font, x, y: ay + 29, 'text-anchor': 'middle' }, label);
      });

      // pips ruler
      add(svg, 'path', { d: `M${ax - 34} 23h11v${c.pips[1]}h-11`, fill: 'none', stroke: grey, 'stroke-width': 2 });
      add(svg, 'text', { ...font, 'text-anchor': 'middle', transform: `translate(${ax - 33} ${23 + c.pips[1] / 2}) rotate(-90)` }, c.pips[0]);

      // bar countdown
      const tx = ax - c.timer[0], peak = ax - c.timer[1];
      add(svg, 'path', { d: `M${tx + 4} ${ay - 19}H${peak - 10}L${peak} ${ay - 31}L${peak + 10} ${ay - 19}H${tx + 78}q4 0 4 4V${ay + 5}q0 4 -4 4H${tx + 4}q-4 0 -4 -4V${ay - 15}q0 -4 4 -4z`, stroke: grey, 'stroke-width': 2 });
      add(svg, 'rect', { x: tx + 5, y: ay - 13, width: 8, height: 18, fill: 'url(#dots)' });
      add(svg, 'text', { ...font, x: tx + 21, y: ay + 3 }, '27:50');

      // target label
      if (c.target === 'up') {
        add(svg, 'path', { d: `M${ax + 7} 12H${ax + 41}L${ax + 51} 0L${ax + 61} 12H${ax + 94}q6 0 6 6V35q0 6 -6 6H${ax + 7}q-6 0 -6 -6V18q0 -6 6 -6z`, fill: '#009345', 'fill-opacity': .82 });
        add(svg, 'text', { ...font, 'font-size': 21, x: ax + 6, y: 33, fill: '#101010' }, 'Target');
      } else {
        const t = c.target;
        add(svg, 'path', { d: `M${ax - 9} ${t}L${ax + 1} ${t - 13}q2 -2 6 -2H${ax + 88}q6 0 6 6V${t + 9}q0 6 -6 6H${ax + 7}q-4 0 -6 -2z`, fill: '#009345' });
        add(svg, 'text', { ...font, 'font-size': 20, x: ax + 15, y: t + 7, fill: '#101010' }, 'Target');
      }
    }

    // redraw whenever a plot area changes size
    charts.forEach((c, i) => new ResizeObserver(() => draw(c, i)).observe($('chart' + i).parentElement));
  </script>
</body>
</html>
